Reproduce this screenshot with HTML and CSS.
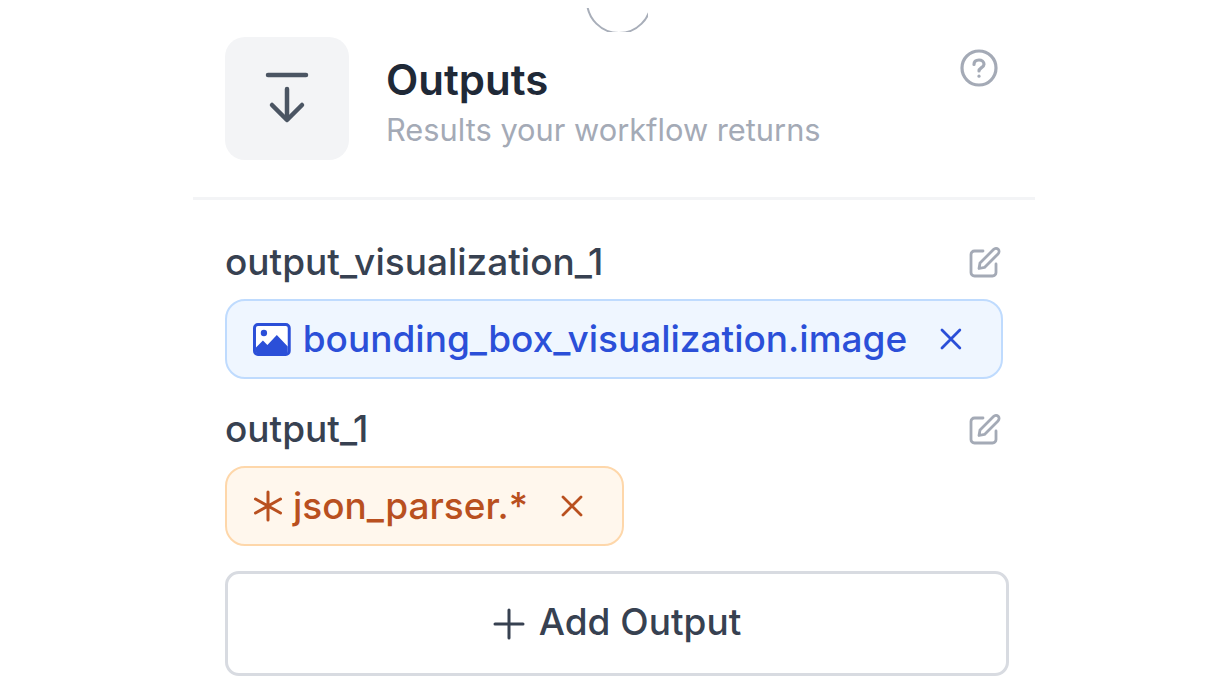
FILE: index.html
```html
<!DOCTYPE html>
<html lang="en">
<head>
  <meta charset="UTF-8" />
  <title>Outputs</title>
  <link rel="stylesheet" href="styles.css">
</head>
<body>
  <div class="panel">
    <!-- connector circle peeking in from the node above -->
    <div class="connector"></div>

    <div class="panel-header">
      <div class="header-icon">
        <svg width="44" height="54" viewBox="0 0 44 54" fill="none" stroke="#4b5563" stroke-width="4.500" stroke-linecap="round" stroke-linejoin="round">
          <path d="M3 3H41"/>
          <path d="M22 17V47"/>
          <path d="M7 33L22 48L37 33"/>
        </svg>
      </div>
      <div class="header-text">
        <div class="title">Outputs</div>
        <div class="subtitle">Results your workflow returns</div>
      </div>
      <svg class="help-icon" width="38" height="38" viewBox="0 0 38 38" fill="none" stroke="#a4aab6" stroke-width="3.200" stroke-linecap="round">
        <circle cx="19" cy="19" r="17"/>
        <path d="M14 15.500C14 12.500 16.200 11 19 11C21.800 11 24 12.600 24 15.200C24 18.600 19 18.600 19 22"/>
        <path d="M19 27V27.200"/>
      </svg>
    </div>

    <div class="outputs">
      <div class="output-row">
        <div class="output-name">
          <span>output_visualization_1</span>
          <svg class="edit-icon" width="32" height="32" viewBox="0 0 32 32" fill="none" stroke="#a4aab6" stroke-width="2.800" stroke-linecap="round" stroke-linejoin="round">
            <path d="M14 5H5.500C3.500 5 2 6.500 2 8.500V26.500C2 28.500 3.500 30 5.500 30H23.500C25.500 30 27 28.500 27 26.500V18"/>
            <path d="M11 17L24.500 3.500C25.900 2.100 28 2.100 29.200 3.300C30.400 4.500 30.400 6.500 29 7.900L15.500 21.400L10 22.500L11 17Z"/>
          </svg>
        </div>
        <div class="chip chip-blue">
          <svg width="38" height="33" viewBox="0 0 38 33">
            <rect x="1.500" y="1.500" width="35" height="30" rx="3.500" fill="#fff" stroke="#2b4fd8" stroke-width="3"/>
            <circle cx="11" cy="10" r="3.200" fill="#2b4fd8"/>
            <path d="M3 29V24.500L10 17.500L14.500 22L24 12L35 23.500V29C35 29.800 34.500 30 34 30H4C3.500 30 3 29.800 3 29Z" fill="#2b4fd8"/>
          </svg>
          <span class="chip-label">bounding_box_visualization.image</span>
          <svg class="chip-close" width="22" height="22" viewBox="0 0 22 22" fill="none" stroke="currentColor" stroke-width="2.800" stroke-linecap="round">
            <path d="M2 2L20 20M20 2L2 20"/>
          </svg>
        </div>
      </div>

      <div class="output-row">
        <div class="output-name">
          <span>output_1</span>
          <svg class="edit-icon" width="32" height="32" viewBox="0 0 32 32" fill="none" stroke="#a4aab6" stroke-width="2.800" stroke-linecap="round" stroke-linejoin="round">
            <path d="M14 5H5.500C3.500 5 2 6.500 2 8.500V26.500C2 28.500 3.500 30 5.500 30H23.500C25.500 30 27 28.500 27 26.500V18"/>
            <path d="M11 17L24.500 3.500C25.900 2.100 28 2.100 29.200 3.300C30.400 4.500 30.400 6.500 29 7.900L15.500 21.400L10 22.500L11 17Z"/>
          </svg>
        </div>
        <div class="chip chip-orange">
          <svg width="30" height="32" viewBox="0 0 30 32" fill="none" stroke="currentColor" stroke-width="3" stroke-linecap="round">
            <path d="M15 2V30M2.500 9L27.500 23M27.500 9L2.500 23"/>
          </svg>
          <span class="chip-label">json_parser.*</span>
          <svg class="chip-close" width="22" height="22" viewBox="0 0 22 22" fill="none" stroke="currentColor" stroke-width="2.800" stroke-linecap="round">
            <path d="M2 2L20 20M20 2L2 20"/>
          </svg>
        </div>
      </div>
    </div>

    <button class="add-btn">
      <svg width="32" height="32" viewBox="0 0 32 32" fill="none" stroke="#374151" stroke-width="3" stroke-linecap="round">
        <path d="M16 2V30M2 16H30"/>
      </svg>
      <span class="add-label">Add Output</span>
    </button>
  </div>
</body>
</html>
```

FILE: styles.css
```css
* {
  margin: 0;
  padding: 0;
  box-sizing: border-box;
}

body {
  font-family: 'Inter', 'Liberation Sans', sans-serif;
  background: #fff;
  height: 694px;
  overflow: hidden;
}

.panel {
  position: relative;
  width: 842px;
  margin-left: 193px;
  padding-top: 37px;
}

.connector {
  position: absolute;
  top: 8px;
  left: 393px;
  width: 62px;
  height: 24px;
  overflow: hidden;
}

.connector::before {
  content: '';
  position: absolute;
  top: -40px;
  left: 0;
  width: 62px;
  height: 62px;
  border: 2.500px solid #a8aeb9;
  border-radius: 50%;
}

.panel-header {
  display: flex;
  align-items: flex-start;
  padding: 0 32px 37px;
  border-bottom: 3px solid #f3f4f6;
}

.header-icon {
  width: 124px;
  height: 123px;
  background: #f3f4f6;
  border-radius: 20px;
  display: flex;
  align-items: center;
  justify-content: center;
  flex-shrink: 0;
}

.header-text {
  margin-left: 37px;
  padding-top: 21px;
  flex: 1;
}

.title {
  font-size: 42px;
  line-height: 44px;
  font-weight: 600;
  color: #1f2937;
}

.subtitle {
  font-size: 30.800px;
  line-height: 38px;
  margin-top: 9px;
  color: #a4aab6;
}

.help-icon {
  margin-top: 12px;
  margin-right: 5px;
}

.outputs {
  padding: 0 32px;
  margin-top: 40px;
  display: flex;
  flex-direction: column;
  gap: 28px;
}

.output-name {
  display: flex;
  align-items: center;
  justify-content: space-between;
  font-size: 37px;
  line-height: 44px;
  font-weight: 500;
  color: #374151;
  margin-bottom: 15px;
}

.edit-icon {
  margin-right: 2px;
}

.chip {
  display: inline-flex;
  align-items: center;
  height: 80px;
  border-radius: 20px;
  border: 2.500px solid;
  font-size: 37px;
  font-weight: 500;
  padding: 0 39px 0 26px;
}

.chip-blue {
  display: flex;
  background: #eff6ff;
  border-color: #bfdbfe;
  color: #2b4fd8;
}

.chip-orange {
  background: #fff7ed;
  border-color: #fed7aa;
  color: #b9501f;
}

.chip-label {
  margin-left: 12px;
  padding-bottom: 2px;
}

.chip-orange .chip-label {
  margin-left: 10px;
}

.chip-close {
  margin-left: 33px;
}

.add-btn {
  display: flex;
  align-items: center;
  justify-content: center;
  gap: 14px;
  width: 784px;
  height: 105px;
  margin: 25px 0 0 32px;
  background: #fff;
  border: 3px solid #d8dbe1;
  border-radius: 14px;
  font-family: inherit;
  font-size: 37px;
  font-weight: 500;
  color: #374151;
}

.add-label {
  padding-bottom: 4px;
}
```
